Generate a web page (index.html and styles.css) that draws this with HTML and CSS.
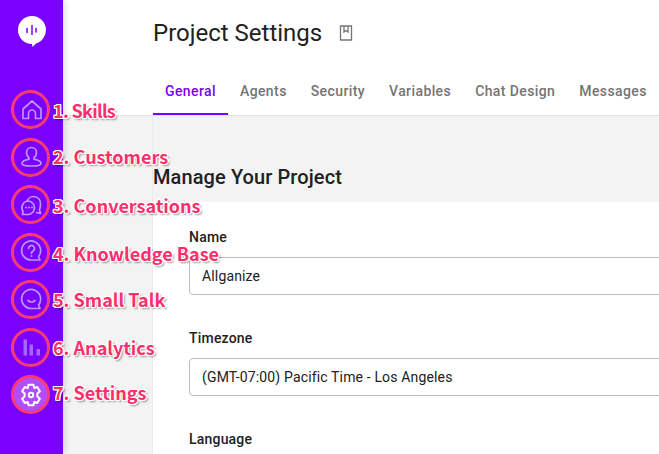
FILE: index.html
```html
<!DOCTYPE html>
<html lang="en">
<head>
  <meta charset="UTF-8" />
  <title>Project Settings</title>
  <meta name="viewport" content="width=device-width, initial-scale=1.0" />
  <link rel="stylesheet" href="styles.css">
</head>
<body>
  <aside class="sidebar">
    <div class="logo">
      <svg width="30" height="36" viewBox="0 0 30 36">
        <path fill="#fff" d="M15 2a14 14 0 0 1 4 27.4L15.5 33 15 30A14 14 0 0 1 15 2z"/>
        <path stroke="#7a00ff" stroke-width="1.5" stroke-linecap="round" d="M10 14.5v4M15 11.5v9M19 14.5v3.500"/>
      </svg>
    </div>
    <nav class="nav">
      <div class="nav-item">
        <span class="ring">
          <svg class="icon" viewBox="0 0 24 24"><path d="M4 11 13 3l9 8v9.500h-5.500v-5a3.500 3.500 0 0 0-7 0v5H4z"/></svg>
        </span>
        <span class="note note-skills">1. Skills</span>
      </div>
      <div class="nav-item">
        <span class="ring">
          <svg class="icon" viewBox="0 0 24 24"><path d="M12.500 2.500c3 0 5 2.300 5 5.300 0 2.200-1 4-2.500 5.200v1.200c3 .6 7 1.800 7 4.300 0 1.900-2.500 2.500-9.500 2.500s-9.500-.6-9.500-2.500c0-2.500 4-3.700 7-4.300V13c-1.500-1.200-2.500-3-2.500-5.200 0-3 2-5.300 5-5.300z"/></svg>
        </span>
        <span class="note note-customers">2. Customers</span>
      </div>
      <div class="nav-item">
        <span class="ring">
          <svg class="icon" viewBox="0 0 24 24">
            <path d="M8 8a7 7 0 0 1 13.500 3c0 2.500-.5 4.500-1 6l1 3.500-4-1"/>
            <path class="front" d="M9.500 8a6.800 6.800 0 0 1 0 13.500H3.500l.5-3A6.800 6.800 0 0 1 9.500 8z"/>
            <path class="dots" d="M7 14.500h.01M10 14.500h.01M13 14.500h.01"/>
          </svg>
        </span>
        <span class="note note-shift">3. Conversations</span>
      </div>
      <div class="nav-item">
        <span class="ring">
          <svg class="icon" viewBox="0 0 24 24">
            <path d="M12.500 20H21l-1.500-3.500A9.500 9.500 0 1 0 12.500 20z"/>
            <path d="M9.500 8.500a3 3 0 1 1 4.500 2.600c-1 .6-1.500 1.100-1.500 2.100"/>
            <path class="dots" d="M12.500 16h.01"/>
          </svg>
        </span>
        <span class="note note-shift">4. Knowledge Base</span>
      </div>
      <div class="nav-item">
        <span class="ring">
          <svg class="icon" viewBox="0 0 24 24">
            <path d="M12.500 20.500H21l-1.500-3.500A9.500 9.500 0 1 0 12.500 20.500z"/>
            <path d="M9 12.500c1.500 2 5.500 2 7 0"/>
          </svg>
        </span>
        <span class="note">5. Small Talk</span>
      </div>
      <div class="nav-item">
        <span class="ring">
          <svg class="icon icon-bars" viewBox="0 0 24 24">
            <rect x="4.500" y="4.500" width="3.500" height="16"/>
            <rect x="10.500" y="9.500" width="3.500" height="11"/>
            <rect x="17.500" y="14" width="3.500" height="6.500"/>
          </svg>
        </span>
        <span class="note">6. Analytics</span>
      </div>
      <div class="nav-item active">
        <span class="ring">
          <svg class="icon" viewBox="0 0 24 24">
            <path d="M9.500 1.800h5l.8 3.300 2.900-1.100 2.700 4.300-2.500 2.300v2.800l2.500 2.300-2.700 4.300-2.900-1.100-.8 3.300h-5l-.8-3.300-2.900 1.100-2.700-4.300 2.500-2.300v-2.800L3.100 8.300l2.700-4.300 2.900 1.100z"/>
            <circle cx="12" cy="12" r="2.200"/>
          </svg>
        </span>
        <span class="note note-settings">7. Settings</span>
      </div>
    </nav>
  </aside>

  <div class="main">
    <header class="header">
      <div class="title-row">
        <h1 class="title">Project Settings</h1>
        <svg class="book" width="14" height="16" viewBox="0 0 14 16">
          <path d="M1.500 1h11v14h-11zM5 1v6l2-1.500L9 7V1"/>
        </svg>
      </div>
      <div class="tabs">
        <a class="tab active">General</a>
        <a class="tab">Agents</a>
        <a class="tab">Security</a>
        <a class="tab">Variables</a>
        <a class="tab">Chat Design</a>
        <a class="tab">Messages</a>
      </div>
    </header>
    <div class="body">
      <section class="content">
        <div class="band">
          <h2 class="heading">Manage Your Project</h2>
        </div>
        <form class="form">
          <div class="field">
            <label class="label">Name</label>
            <div class="input">Allganize</div>
          </div>
          <div class="field">
            <label class="label">Timezone</label>
            <div class="input">(GMT-07:00) Pacific Time - Los Angeles</div>
          </div>
          <div class="field">
            <label class="label">Language</label>
          </div>
        </form>
      </section>
    </div>
  </div>
</body>
</html>
```

FILE: styles.css
```css
* {
  box-sizing: border-box;
}

html, body {
  height: 100%;
}

body {
  margin: 0;
  overflow: hidden;
  display: flex;
  font-family: Roboto, sans-serif;
  color: #212121;
  background: #f3f3f3;
}

.sidebar {
  position: relative;
  z-index: 2;
  flex: 0 0 63px;
  background: #7a00ff;
  box-shadow: 2px 0 6px rgba(0, 0, 0, 0.12);
}

.logo {
  display: flex;
  justify-content: center;
  padding-top: 14px;
  height: 90px;
}

.nav {
  display: flex;
  flex-direction: column;
  gap: 8.5px;
  padding-left: 11px;
}

.nav-item {
  position: relative;
  height: 39px;
}

.ring {
  display: flex;
  align-items: center;
  justify-content: center;
  width: 39px;
  height: 39px;
  border: 3px solid #fb3a72;
  border-radius: 50%;
}

.active .ring {
  background: #b14dff;
}

.icon {
  flex: none;
  width: 24px;
  height: 24px;
  fill: none;
  stroke: #bb96ff;
  stroke-width: 1.7;
  stroke-linejoin: round;
  stroke-linecap: round;
}

.icon .front {
  fill: #7a00ff;
}

.icon .dots {
  stroke-width: 2;
}

.icon-bars {
  fill: #a368ff;
  stroke: none;
}

.active .icon {
  stroke: #fff;
  stroke-width: 2;
}

/* red callouts drawn over the screenshot */
.note {
  position: absolute;
  left: 42px;
  top: 6px;
  white-space: nowrap;
  font-family: "Noto Sans CJK KR", "Noto Sans", sans-serif;
  font-size: 18px;
  line-height: 26px;
  font-weight: 700;
  color: #fb2f6c;
  text-shadow:
    1px 0 0 #fff, -1px 0 0 #fff, 0 1px 0 #fff, 0 -1px 0 #fff,
    1px 1px 0 #fff, -1px 1px 0 #fff, 1px -1px 0 #fff, -1px -1px 0 #fff,
    2px 2px 2px rgba(0, 0, 0, 0.4);
}

.note-skills {
  top: 7px;
  letter-spacing: -0.7px;
}

.note-customers {
  top: 5px;
}

.note-shift {
  top: 7px;
}

.note-settings {
  top: 4px;
}

.main {
  flex: 1;
  min-width: 0;
  display: flex;
  flex-direction: column;
}

.header {
  flex: 0 0 116px;
  background: #fff;
  border-bottom: 1px solid #e2e2e2;
  padding-left: 90px;
}

.title-row {
  display: flex;
  align-items: center;
  gap: 17px;
  height: 71px;
  padding-bottom: 5px;
}

.title {
  margin: 0;
  font-size: 24px;
  font-weight: 400;
}

.book {
  fill: none;
  stroke: #757575;
  stroke-width: 1.3;
}

.tabs {
  display: flex;
  white-space: nowrap;
}

.tab {
  height: 44px;
  padding: 12px 12px 0;
  font-size: 14px;
  line-height: 16px;
  font-weight: 500;
  letter-spacing: 0.4px;
  color: #757575;
}

.tab.active {
  color: #7a00ff;
  border-bottom: 2px solid #7a00ff;
}

.body {
  flex: 1;
  padding-left: 90px;
  min-height: 0;
}

.content {
  height: 100%;
  background: #fff;
  border-left: 1px solid #ebebeb;
  margin-left: -1px;
}

.band {
  height: 86px;
  padding-top: 49px;
  background: #f3f3f3;
}

.heading {
  margin: 0;
  font-size: 20px;
  line-height: 24px;
  font-weight: 500;
  letter-spacing: 0.1px;
}

.form {
  display: flex;
  flex-direction: column;
  gap: 35px;
  padding: 27px 0 0 36px;
}

.field {
  width: 600px;
}

.label {
  display: block;
  font-size: 14px;
  line-height: 16px;
  font-weight: 500;
  letter-spacing: 0.2px;
  margin-bottom: 12px;
}

.input {
  height: 38px;
  padding: 0 12px;
  border: 1px solid #bdbdbd;
  border-radius: 4px;
  font-size: 14px;
  line-height: 36px;
  letter-spacing: 0.15px;
  background: #fff;
}
```
